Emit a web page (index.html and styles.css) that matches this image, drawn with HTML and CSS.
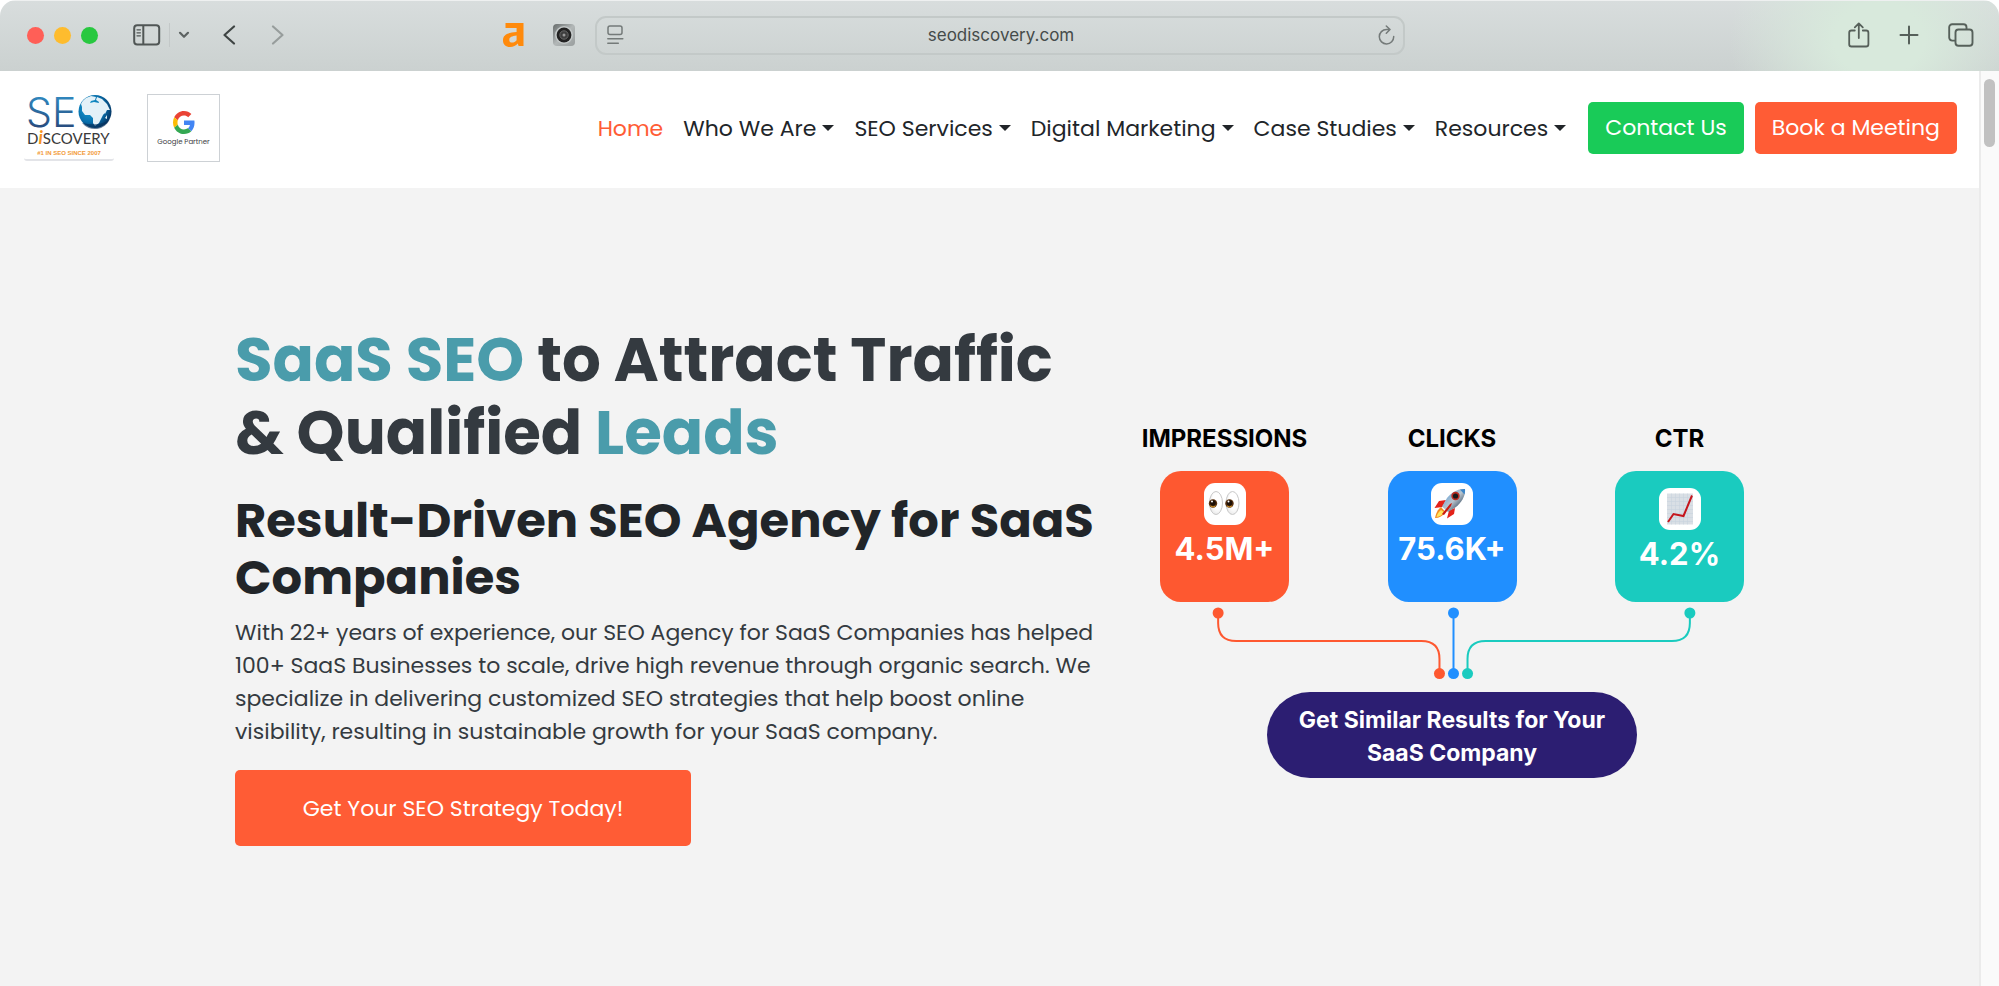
FILE: index.html
```
<!DOCTYPE html>
<html lang="en">
<head>
<meta charset="UTF-8" />
<meta name="viewport" content="width=device-width, initial-scale=1" />
<title>SaaS SEO Agency | SEO Discovery</title>
<link rel="stylesheet" href="styles.css">
</head>
<body>

<div class="window">
  <div class="toolbar">
    <div class="toolbar-left">
      <div class="lights">
        <span class="light red"></span>
        <span class="light yellow"></span>
        <span class="light green"></span>
      </div>
      <div class="sidebar-group">
        <button class="tool" aria-label="Show sidebar">
          <svg width="28" height="22" viewBox="0 0 28 22" fill="none" stroke="#505655" stroke-width="2">
            <rect x="1.2" y="1.2" width="25" height="19.4" rx="3"/>
            <path d="M10.3 1v20"/>
            <path d="M4 5.8h3.4M4 8.8h3.4M4 11.8h3.4" stroke-width="1.3" stroke-linecap="round"/>
          </svg>
        </button>
        <span class="divider"></span>
        <button class="tool" aria-label="Tab groups">
          <svg width="12" height="8" viewBox="0 0 12 8" fill="none" stroke="#5d6362" stroke-width="2.2" stroke-linecap="round" stroke-linejoin="round"><path d="M2 1.8l4 4 4-4"/></svg>
        </button>
      </div>
      <div class="history">
        <button class="tool" aria-label="Back">
          <svg width="13" height="20" viewBox="0 0 13 20" fill="none" stroke="#3f4544" stroke-width="2.2" stroke-linecap="round" stroke-linejoin="round"><path d="M11 1.500L1.500 10l9.500 8.500"/></svg>
        </button>
        <button class="tool" aria-label="Forward">
          <svg width="13" height="20" viewBox="0 0 13 20" fill="none" stroke="#979d9c" stroke-width="2.2" stroke-linecap="round" stroke-linejoin="round"><path d="M2 1.500l9.500 8.500L2 18.500"/></svg>
        </button>
      </div>
      <div class="extensions">
        <button class="tool" aria-label="Ahrefs">
          <svg width="21" height="24" viewBox="0 0 21 24" fill="#ff8a0c" fill-rule="evenodd"><path d="M2.5 0H20.5V23H15.6L14.8 20.6C12.8 22.8 10.3 24 7.2 24 2.8 24 0 21.4 0 17.4 0 11.8 4.3 9.8 13.6 9V5H2.5ZM13.6 12.6C9 13.2 6.3 14.2 6.3 16.9 6.3 18.6 7.4 19.6 9 19.6 10.8 19.6 12.4 18.7 13.6 17.3Z"/></svg>
        </button>
        <button class="tool" aria-label="Camera">
          <svg width="22" height="22" viewBox="0 0 22 22">
            <defs><linearGradient id="cam" x1="0" y1="0" x2="1" y2="1"><stop offset="0" stop-color="#666b6b"/><stop offset=".5" stop-color="#b2b7b7"/><stop offset="1" stop-color="#999e9e"/></linearGradient></defs>
            <rect width="22" height="22" rx="4" fill="url(#cam)"/>
            <circle cx="11" cy="11" r="9" fill="#c3c8c8"/>
            <circle cx="11" cy="11" r="7.4" fill="#222"/>
            <circle cx="11" cy="11" r="4.2" fill="#3e3e3e" stroke="#666"/>
            <circle cx="11" cy="11" r="1.5" fill="#999"/>
          </svg>
        </button>
      </div>
    </div>

    <div class="address">
      <svg width="18" height="20" viewBox="0 0 18 20" fill="none" stroke="#747a79" stroke-width="1.5" stroke-linecap="round">
        <rect x="1" y="1" width="14" height="8.6" rx="2"/>
        <path d="M.8 13.7h15M.8 18.3h10.5"/>
      </svg>
      <input type="text" class="url" value="seodiscovery.com" aria-label="Address" readonly />
      <button class="tool" aria-label="Reload">
        <svg width="17" height="20" viewBox="0 0 17 20" fill="none" stroke="#747a79" stroke-width="1.5" stroke-linecap="round" stroke-linejoin="round"><path d="M15.700 11.500a7.200 7.200 0 1 1-7.200-7h3M8.300 1l3.700 3.500-3.700 3.700"/></svg>
      </button>
    </div>

    <div class="toolbar-right">
      <button class="tool" aria-label="Share">
        <svg width="22" height="26" viewBox="0 0 22 26" fill="none" stroke="#56605a" stroke-width="1.8" stroke-linecap="round" stroke-linejoin="round"><path d="M6.800 8.500H3.500a2.300 2.300 0 0 0-2.300 2.300v11.400a2.300 2.300 0 0 0 2.300 2.300h14.600a2.300 2.300 0 0 0 2.300-2.300V10.800a2.300 2.300 0 0 0-2.300-2.300h-3.300M10.800 16V1.600M6.800 5.400l4-4 4 4"/></svg>
      </button>
      <button class="tool" aria-label="New tab">
        <svg width="20" height="20" viewBox="0 0 20 20" fill="none" stroke="#56605a" stroke-width="2" stroke-linecap="round"><path d="M10 1.500v17M1.500 10h17"/></svg>
      </button>
      <button class="tool" aria-label="Tab overview">
        <svg width="26" height="24" viewBox="0 0 26 24" fill="none" stroke="#56605a" stroke-width="1.900"><rect x="7.500" y="6.500" width="17" height="16.300" rx="3"/><path d="M7 17.600H4.200a3 3 0 0 1-3-3V4.200a3 3 0 0 1 3-3h11.300a3 3 0 0 1 3 3V6"/></svg>
      </button>
    </div>
  </div>

  <div class="viewport">
    <div class="page">
      <header class="site-header">
        <div class="logos">
          <a href="#" class="seo-logo" aria-label="SEO Discovery">
            <svg width="92" height="68" viewBox="0 0 92 68">
              <defs>
                <linearGradient id="seoText" x1="0" y1="0" x2="0" y2="1"><stop offset=".2" stop-color="#2f86bd"/><stop offset="1" stop-color="#263a6b"/></linearGradient>
                <radialGradient id="globe" cx=".35" cy=".4" r=".7"><stop offset="0" stop-color="#18a3d8"/><stop offset=".6" stop-color="#0870ad"/><stop offset="1" stop-color="#06305c"/></radialGradient>
              </defs>
              <rect x="1" y="54" width="90" height="13" rx="3" fill="#e3e4e8"/>
              <rect x="0" y="52" width="92" height="13" rx="3" fill="#fff"/>
              <text x="3" y="33" class="logo-seo" fill="url(#seoText)">SE</text>
              <circle cx="72" cy="17.500" r="16.500" fill="url(#globe)"/>
              <path d="M58 10q2-4 5-6l5-2 5 1-1 3-4 1-1 2 4-1 5 1 3 4 2 3 3 0-4 5-2 4-2 4-4 3-2-3 0-5-3-3-5 0-3-4 0-4zM74 3l5 2 5 5 3 6-3 0-2 4-3-5-4-4 1-3-3-2zM82 24l2-3 0 4z" fill="#e3f1f8"/>
              <path d="M59 29a16.500 16.500 0 0 0 28-4q-9 8-28 4z" fill="#06305c" opacity=".6"/>
              <text x="4" y="50" class="logo-disc">D<tspan class="logo-i">i</tspan>SCOVERY</text>
              <text x="46" y="61" class="logo-tag" text-anchor="middle">#1 IN SEO SINCE 2007</text>
            </svg>
          </a>
          <a href="#" class="partner">
            <svg width="22" height="23" viewBox="0 0 48 48" preserveAspectRatio="none">
              <path fill="#ea4335" d="M24 9.500c3.540 0 6.710 1.220 9.210 3.600l6.850-6.850C35.900 2.380 30.470 0 24 0 14.620 0 6.510 5.380 2.560 13.220l7.980 6.190C12.430 13.720 17.740 9.500 24 9.500z"/>
              <path fill="#4285f4" d="M46.980 24.550c0-1.570-.15-3.090-.38-4.550H24v9.020h12.940c-.58 2.960-2.260 5.480-4.780 7.180l7.730 6c4.510-4.180 7.090-10.360 7.090-17.650z"/>
              <path fill="#fbbc05" d="M10.530 28.590c-.48-1.450-.76-2.990-.76-4.590s.27-3.140.76-4.590l-7.980-6.190C.92 16.460 0 20.120 0 24c0 3.880.92 7.540 2.560 10.780l7.970-6.190z"/>
              <path fill="#34a853" d="M24 48c6.480 0 11.930-2.130 15.890-5.810l-7.730-6c-2.150 1.450-4.920 2.300-8.160 2.300-6.260 0-11.570-4.220-13.470-9.910l-7.980 6.190C6.510 42.620 14.620 48 24 48z"/>
            </svg>
            <span>Google Partner</span>
          </a>
        </div>

        <nav class="menu">
          <a href="#" class="active">Home</a>
          <a href="#" class="drop">Who We Are</a>
          <a href="#" class="drop">SEO Services</a>
          <a href="#" class="drop">Digital Marketing</a>
          <a href="#" class="drop">Case Studies</a>
          <a href="#" class="drop">Resources</a>
        </nav>
        <div class="header-buttons">
          <button class="btn contact">Contact Us</button>
          <button class="btn meeting">Book a Meeting</button>
        </div>
      </header>

      <main class="hero">
        <div class="hero-inner">
          <div class="hero-text">
            <h1><span>SaaS SEO</span> to Attract Traffic<br>&amp; Qualified <span>Leads</span></h1>
            <h2>Result-Driven SEO Agency for SaaS<br>Companies</h2>
            <p>With 22+ years of experience, our SEO Agency for SaaS Companies has helped<br>
              100+ SaaS Businesses to scale, drive high revenue through organic search. We<br>
              specialize in delivering customized SEO strategies that help boost online<br>
              visibility, resulting in sustainable growth for your SaaS company.</p>
            <button class="btn cta">Get Your SEO Strategy Today!</button>
          </div>

          <div class="results">
            <div class="stats">
              <div class="stat">
                <h3>IMPRESSIONS</h3>
                <div class="card orange">
                  <span class="emoji">
                    <svg width="42" height="42" viewBox="0 0 42 42">
                      <defs><radialGradient id="eye" cx=".6" cy=".4" r=".7"><stop offset=".5" stop-color="#fff"/><stop offset="1" stop-color="#e4e4e4"/></radialGradient></defs>
                      <ellipse cx="12" cy="20" rx="6.500" ry="11.500" fill="url(#eye)" stroke="#c9c9c9"/>
                      <ellipse cx="28.500" cy="20" rx="6.500" ry="11.500" fill="url(#eye)" stroke="#c9c9c9"/>
                      <circle cx="9" cy="20.500" r="4.200" fill="#5a3210"/><circle cx="25.500" cy="20.500" r="4.200" fill="#5a3210"/>
                      <circle cx="9" cy="20" r="2.800" fill="#1d0f05"/><circle cx="25.500" cy="20" r="2.800" fill="#1d0f05"/>
                      <path d="M6.500 23q2.500 2 5 0M23 23q2.500 2 5 0" stroke="#d89a2a" fill="none"/>
                      <circle cx="8" cy="18.500" r="1" fill="#fff"/><circle cx="24.500" cy="18.500" r="1" fill="#fff"/>
                    </svg>
                  </span>
                  <strong>4.5M+</strong>
                </div>
              </div>
              <div class="stat">
                <h3>CLICKS</h3>
                <div class="card blue">
                  <span class="emoji">
                    <svg width="42" height="42" viewBox="0 0 42 42">
                      <defs><linearGradient id="rocket" x1="0" y1="0" x2="1" y2="1"><stop offset=".2" stop-color="#6ca6d8"/><stop offset=".5" stop-color="#b9c4cd"/><stop offset=".8" stop-color="#40566c"/></linearGradient></defs>
                      <path d="M15 17l-7 1-4.500 7 8-1zM24 25l-1 6-7 4.500 2-8z" fill="#e32219"/>
                      <path d="M10 24c-4 3-5 7-6 11 4 0 8-2 10.500-6z" fill="#f58a1f"/>
                      <path d="M10 27c-3 2-4 5-4.500 7 3-.5 6-2 7.500-5z" fill="#ffe45c"/>
                      <path d="M34 6c-7-.5-13 3-18 9l-5 8.500 6 5.500 8-5c6-5 9.500-11 9-18z" fill="url(#rocket)"/>
                      <path d="M29 6.500c2-.5 4-.7 5-.5.200 2 0 3.500-.500 5.500z" fill="#3d86c8"/>
                      <circle cx="24.500" cy="13" r="4.200" fill="#b92a22"/><circle cx="24.500" cy="13" r="2.600" fill="#17191d"/>
                      <path d="M11 31l8-10 2-1-1 3-7 9z" fill="#c91b12"/>
                    </svg>
                  </span>
                  <strong>75.6K+</strong>
                </div>
              </div>
              <div class="stat">
                <h3>CTR</h3>
                <div class="card teal">
                  <span class="emoji">
                    <svg width="42" height="42" viewBox="0 0 42 42">
                      <rect x="8" y="5.500" width="26" height="31" fill="#d9dfe5"/>
                      <path d="M8 9.500h26M8 13.500h26M8 17.500h26M8 21.500h26M8 25.500h26M8 29.500h26M8 33.500h26M12.500 5.500v31M16.500 5.500v31M20.500 5.500v31M24.500 5.500v31M28.500 5.500v31" stroke="#c8d3dd" stroke-width=".6"/>
                      <path d="M9 34l5.500-8 10 2L33 7.500" fill="none" stroke="#c5161d" stroke-width="2"/>
                    </svg>
                  </span>
                  <strong>4.2%</strong>
                </div>
              </div>
            </div>

            <svg class="lines" viewBox="0 0 583 90" fill="none" stroke-width="2">
              <g stroke="#fe5830"><path d="M58 11v10q0 18 18 18h185q18 0 18 18v14"/><g fill="#fe5830" stroke="none"><circle cx="58" cy="11" r="5.500"/><circle cx="279" cy="71.500" r="5.500"/></g></g>
              <g stroke="#208fff"><path d="M293 11v60"/><g fill="#208fff" stroke="none"><circle cx="293" cy="11" r="5.500"/><circle cx="293" cy="71.500" r="5.500"/></g></g>
              <g stroke="#1acbbf"><path d="M529 11v10q0 18-18 18H325q-18 0-18 18v14"/><g fill="#1acbbf" stroke="none"><circle cx="529" cy="11" r="5.500"/><circle cx="307" cy="71.500" r="5.500"/></g></g>
            </svg>

            <button class="pill">Get Similar Results for Your<br>SaaS Company</button>
          </div>
        </div>
      </main>
    </div>
    <div class="scrollbar"><div class="thumb"></div></div>
  </div>
</div>

</body>
</html>
```
FILE: styles.css
```
* {
  box-sizing: border-box;
}

body {
  margin: 0;
  background: #fff;
  font-family: Poppins, Inter, sans-serif;
  color: #212529;
}

button {
  border: none;
  font-family: inherit;
  cursor: pointer;
}

a {
  color: inherit;
  text-decoration: none;
}

.window {
  min-height: 100vh;
  display: flex;
  flex-direction: column;
  border-radius: 16px 16px 0 0;
  overflow: hidden;
}

/* Browser toolbar */
.toolbar {
  display: grid;
  grid-template-columns: 1fr minmax(0, 810px) 1fr;
  align-items: center;
  height: 71px;
  padding-bottom: 2px;
  border-top: 1px solid #eef0f0;
  background:
    radial-gradient(ellipse 150px 120px at 94% 55%, #d8e9dc 30%, transparent),
    linear-gradient(#d8dddd, #cbd1d0);
}

.toolbar-left,
.toolbar-right,
.lights,
.sidebar-group,
.history,
.extensions {
  display: flex;
  align-items: center;
}

.toolbar-left {
  padding-left: 27px;
}

.toolbar-right {
  justify-content: flex-end;
  gap: 29px;
  padding-right: 25px;
}

.tool {
  padding: 0;
  background: none;
  display: flex;
}

.lights {
  gap: 10px;
}

.light {
  width: 17px;
  height: 17px;
  border-radius: 50%;
}

.red { background: #ff5f57; }
.yellow { background: #febc2e; }
.green { background: #28c840; }

.sidebar-group {
  gap: 8px;
  margin-left: 35px;
}

.divider {
  width: 1px;
  height: 24px;
  background: #c3c8c8;
}

.history {
  gap: 35px;
  margin-left: 33px;
}

.extensions {
  gap: 29px;
  margin-left: auto;
  margin-right: 20px;
}

.address {
  display: flex;
  align-items: center;
  height: 39px;
  padding: 0 8px 0 10px;
  border: 2px solid #c3c9c8;
  border-radius: 11px;
}

.url {
  flex: 1;
  min-width: 0;
  border: none;
  outline: none;
  background: none;
  text-align: center;
  font-family: Inter, sans-serif;
  font-size: 17px;
  color: #454b4a;
}

.viewport {
  flex: 1;
  display: flex;
}

.page {
  flex: 1;
  display: flex;
  flex-direction: column;
}

.scrollbar {
  width: 20px;
  padding: 8px 3px;
  background: #fafafa;
  border-left: 2px solid #ebebeb;
}

.thumb {
  width: 11px;
  height: 68px;
  border-radius: 6px;
  background: #c1c1c1;
}

/* Site header */
.site-header {
  display: flex;
  align-items: center;
  height: 117px;
  padding: 0 22px 3px 23px;
  background: #fff;
}

.logos {
  display: flex;
  gap: 32px;
  margin-right: auto;
}

.seo-logo {
  display: flex;
}

.seo-logo svg {
  overflow: visible;
}

.logo-seo {
  font: 300 41px Inter, sans-serif;
}

.logo-disc {
  font: 15px Lato, sans-serif;
  fill: #3a3a3a;
}

.logo-i {
  font-size: 18px;
  font-style: italic;
  font-weight: bold;
  fill: #f7941d;
}

.logo-tag {
  font: bold 6px "Liberation Sans", sans-serif;
  fill: #f29a38;
}

.partner {
  width: 73px;
  height: 68px;
  padding-top: 16px;
  border: 1px solid #cdd1d5;
  display: flex;
  flex-direction: column;
  align-items: center;
  gap: 3px;
  font-size: 7px;
  color: #3c4043;
}

.menu {
  display: flex;
  gap: 20px;
  padding-top: 2px;
  font-size: 22px;
  line-height: 28px;
  white-space: nowrap;
}

.active {
  color: #ff5c35;
}

.drop::after {
  content: "";
  display: inline-block;
  margin-left: 6px;
  vertical-align: 5px;
  border-top: 6px solid;
  border-left: 6px solid transparent;
  border-right: 6px solid transparent;
}

.header-buttons {
  display: flex;
  gap: 11px;
  margin-left: 22px;
}

.btn {
  border-radius: 5px;
  color: #fff;
  font-size: 22px;
  white-space: nowrap;
}

.contact,
.meeting {
  height: 52px;
  padding: 0 17px 2px;
}

.contact {
  background: #19cb58;
}

.meeting,
.cta {
  background: #ff5c35;
}

/* Hero */
.hero {
  flex: 1;
  padding: 135px 20px 40px;
  background: #f3f3f3;
}

.hero-inner {
  display: flex;
  justify-content: space-between;
  max-width: 1509px;
  margin: 0 auto;
}

h1,
h2,
h3,
p {
  margin: 0;
}

h1 {
  font-size: 61px;
  line-height: 73px;
  color: #343a40;
}

h1 span {
  color: #4a9cab;
}

h2 {
  margin-top: 23px;
  font-size: 48px;
  line-height: 57px;
}

p {
  margin-top: 10px;
  font-size: 22px;
  line-height: 33px;
  color: #343a40;
}

.cta {
  width: 456px;
  height: 76px;
  margin-top: 22px;
}

.results {
  width: 584px;
  padding-top: 101px;
  display: flex;
  flex-direction: column;
  align-items: center;
  font-family: Inter, sans-serif;
}

.stats {
  width: 100%;
  display: flex;
  justify-content: space-between;
}

.stat {
  width: 129px;
  display: flex;
  flex-direction: column;
  align-items: center;
}

.stat h3 {
  font-size: 24px;
  line-height: 30px;
  color: #000;
  white-space: nowrap;
}

.card {
  width: 129px;
  height: 131px;
  margin-top: 17px;
  padding-top: 12px;
  border-radius: 21px;
  display: flex;
  flex-direction: column;
  align-items: center;
  gap: 4px;
  color: #fff;
}

.card strong {
  font-size: 31px;
  line-height: 40px;
}

.orange { background: #fe5830; }
.blue { background: #208fff; }
.teal {
  background: #1acbbf;
  padding-top: 17px;
}

.emoji {
  display: flex;
  border-radius: 11px;
  background: #fff;
}

.lines {
  display: block;
  width: 100%;
}

.pill {
  padding: 12px 32px 8px;
  border-radius: 43px;
  background: #2c1e72;
  color: #fff;
  font-size: 23px;
  font-weight: bold;
  line-height: 33px;
}
```
